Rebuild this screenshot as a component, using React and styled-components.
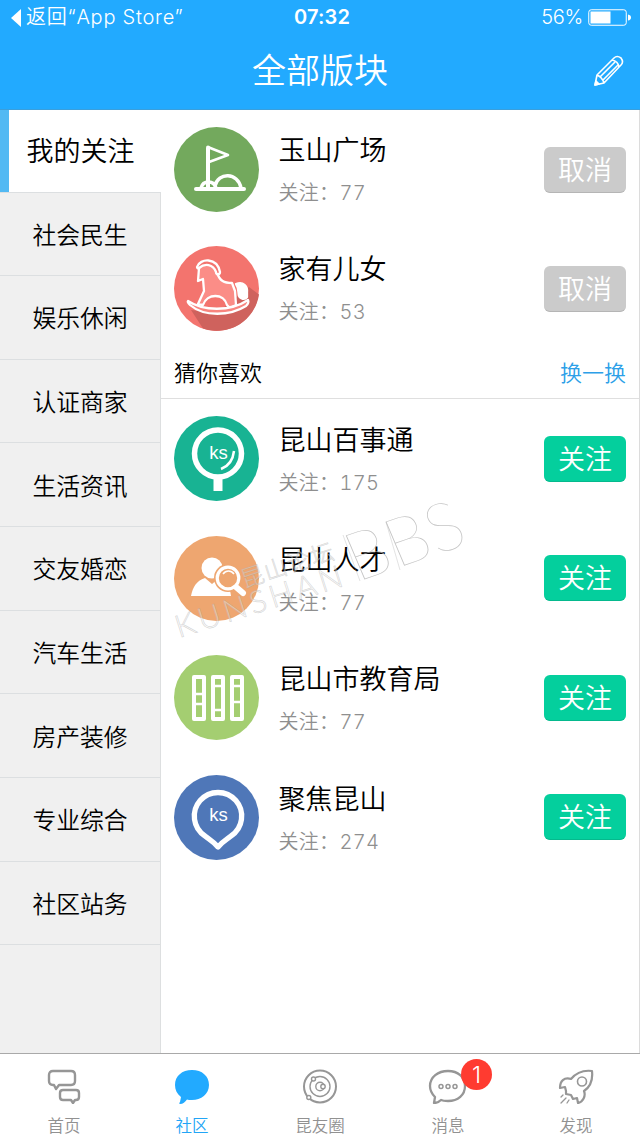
import React, { useState } from "react";
import styled, { createGlobalStyle } from "styled-components";

const GlobalStyle = createGlobalStyle`
    * {
        box-sizing: border-box;
    }
    body {
        margin: 0;
        background: #fff;
        font-family: "Inter", "Noto Sans CJK SC", sans-serif;
        font-weight: 350;
        color: #000;
    }
    button {
        font-family: inherit;
        font-weight: inherit;
        border: 0;
        padding: 0;
        background: none;
    }
    svg {
        display: block;
        flex: none;
    }
`;

const Screen = styled.div`
    position: relative;
    display: flex;
    flex-direction: column;
    width: 640px;
    height: 1138px;
    overflow: hidden;
`;

const Header = styled.header`
    height: 110px;
    background: #22aaff;
    border-bottom: 1px solid #3b9fdc;
    color: #fff;
`;

const StatusBar = styled.div`
    display: grid;
    grid-template-columns: 1fr auto 1fr;
    align-items: center;
    height: 35px;
    padding: 0 9px 0 11px;
    font-size: 20px;
    line-height: 35px;
    letter-spacing: 0.75px;
    font-weight: 400;
`;

const BackLink = styled.div`
    display: flex;
    align-items: center;
    gap: 5px;
    font-weight: 350;
    white-space: nowrap;
`;

const Clock = styled.div`
    padding-left: 2px;
    font-weight: 600;
    letter-spacing: 0.2px;
`;

const Battery = styled.div`
    display: flex;
    align-items: center;
    justify-content: flex-end;
    gap: 5px;
    letter-spacing: -0.3px;
    font-weight: 350;
`;

const TitleBar = styled.div`
    display: grid;
    grid-template-columns: 60px 1fr 60px;
    align-items: center;
    height: 72px;
    h1 {
        margin: 0;
        text-align: center;
        font-size: 34px;
        font-weight: 350;
        line-height: 70px;
    }
    svg {
        justify-self: end;
        margin-right: 15px;
    }
`;

const Content = styled.main`
    display: flex;
    height: 943px;
`;

const Sidebar = styled.nav`
    width: 161px;
    background: #f0f0f0;
    border-right: 1px solid #dddfe0;
`;

const SideItem = styled.div`
    display: flex;
    align-items: center;
    justify-content: center;
    width: ${(props) => (props.$active ? "161px" : "160px")};
    height: ${(props) => (props.$active ? "82.500px" : "83.650px")};
    padding-bottom: ${(props) => (props.$active ? "3px" : "1px")};
    border-bottom: 1px solid #dcdfe1;
    background: ${(props) => (props.$active ? "#fff" : "transparent")};
    box-shadow: ${(props) => (props.$active ? "inset 9px 0 #52b9f3" : "none")};
    font-size: ${(props) => (props.$active ? "27px" : "23.800px")};
    white-space: nowrap;
`;

const List = styled.section`
    flex: 1;
    border-right: 1px solid #dcdcdc;
`;

const Row = styled.div`
    display: flex;
    align-items: center;
    height: ${(props) => (props.$followed ? "119px" : "119.500px")};
    padding: 0 13px;
`;

const RowText = styled.div`
    flex: 1;
    margin-left: 19.500px;
    padding-top: ${(props) => (props.$followed ? "3px" : "5px")};
    h2 {
        margin: 0;
        font-size: 27px;
        font-weight: 350;
        line-height: 40px;
    }
    p {
        margin: 4px 0 0;
        font-size: 20px;
        line-height: 36px;
        letter-spacing: 0.3px;
        font-variant-numeric: tabular-nums;
        color: #8f8f8f;
    }
`;

const FollowButton = styled.button`
    width: 82px;
    height: 46px;
    padding-top: 2px;
    border-radius: 6px;
    border-bottom: 1px solid ${(props) => (props.$followed ? "#b5b5b5" : "#05b98d")};
    background: ${(props) => (props.$followed ? "#cbcbcb" : "#04cf9d")};
    color: #fff;
    font-size: 27px;
    line-height: 43px;
`;

const SectionHeader = styled.div`
    display: flex;
    align-items: center;
    justify-content: space-between;
    height: 51px;
    padding: 0 13px 4px;
    border-bottom: 1px solid #dfdfdf;
    font-size: 22px;
    span:last-child {
        color: #2d9fe8;
    }
`;

const TabBar = styled.footer`
    display: grid;
    grid-template-columns: repeat(5, 1fr);
    height: 85px;
    border-top: 1px solid #a9a9a9;
`;

const Tab = styled.div`
    position: relative;
    display: flex;
    flex-direction: column;
    align-items: center;
    padding-top: 12px;
    font-size: 16.5px;
    line-height: 24px;
    color: ${(props) => (props.$active ? "#22a5f6" : "#919191")};
    svg {
        margin-bottom: 10px;
    }
`;

const Badge = styled.span`
    position: absolute;
    left: 77px;
    top: 5px;
    width: 31px;
    height: 31px;
    border-radius: 50%;
    background: #ff3b30;
    color: #fff;
    font-size: 23px;
    line-height: 32px;
    text-align: center;
`;

const Watermark = styled.svg`
    position: absolute;
    left: 160px;
    top: 490px;
    pointer-events: none;
    text {
        font-family: "Lato", "Noto Sans CJK SC", sans-serif;
        font-weight: 300;
    }
    .thin {
        font-weight: 100;
    }
`;

const FlagIcon = () => (
    <g fill="none" stroke="#fff" strokeWidth="4" strokeLinecap="round" strokeLinejoin="round">
        <path d="M22 62h48" />
        <path d="M34 60V20.500" />
        <path d="M35 20.500l19 7.500-19 7" strokeWidth="2.600" />
        <path d="M27 61c2-8 13-8 15 0M41 59c3-14 23-14 26 2" strokeWidth="3.500" />
    </g>
);

const HorseIcon = () => (
    <g fill="none" stroke="#fff" strokeWidth="2.300" strokeLinecap="round" strokeLinejoin="round">
        <path
            d="M75 41L85 48.500A42.500 42.500 0 0 1 29 82.500L17 64 43 67z"
            fill="#cf625d"
            stroke="none"
        />
        <path
            d="M24 35l1-13c5-7 15-6 18 5 3 8 7 10 15 10l3 8 1 14-6 3-3-3c-3-12-20-12-24 0l-5-1 6-13-1-12z"
            fill="#fb8d87"
        />
        <path d="M23 21c3-9 20-10 23 5 0 3-4 3-4 0-3-8-11-9-17-4-1 1-2 0-2-1z" fill="#f3746e" />
        <path
            d="M14 55c15 10 42 11 60-1 1 2 0 4-2 6-16 10-42 11-56-1-2-2-3-3-2-4z"
            fill="#f8857f"
        />
        <path d="M62 38c7-3 12 2 11 9v4c-2 3-7 2-8-1-1-4 0-8-3-12z" fill="#fff" />
    </g>
);

const KsText = ({ y }) => (
    <text
        x="44.500"
        y={y}
        textAnchor="middle"
        fontSize="18.500"
        fontWeight="400"
        fontFamily="Liberation Sans"
        fill="#fff"
        stroke="none"
    >
        ks
    </text>
);

const MirrorIcon = () => (
    <g fill="none" stroke="#fff">
        <circle cx="44" cy="37.500" r="23.500" strokeWidth="5.500" />
        <path d="M44 61v14" strokeWidth="9" />
        <path d="M60 35c-1 9-5 15-13 18" strokeWidth="2.500" />
        <KsText y="43" />
    </g>
);

const TalentIcon = () => (
    <g fill="#fff">
        <path d="M17 60c2-9 5-15 14-18l7 6 6-5c9 2 12 8 13 17z" />
        <circle cx="38" cy="32" r="10.500" />
        <circle cx="54" cy="42" r="14" fill="#eea670" />
        <path d="M62 51l7 6" stroke="#fff" strokeWidth="6" strokeLinecap="round" />
        <circle cx="54" cy="42" r="10.800" fill="#eea670" stroke="#fff" strokeWidth="3.200" />
        <path d="M49 38c3-4 8-4 11 0" fill="none" stroke="#fff" strokeWidth="1.500" />
    </g>
);

const BooksIcon = () => (
    <g fill="none" stroke="#fff" strokeWidth="4" strokeLinejoin="round">
        <path d="M20 22h10v42H20zM39 22h10v42H39zM58 22h10v42H58z" />
        <path d="M20 39h10M20 49h10M39 31h10M39 55h10M58 31h10M58 47h10" strokeWidth="2.500" />
    </g>
);

const PinIcon = () => (
    <g fill="none" stroke="#fff">
        <path
            d="M44 72c-5-6-8-7-13-11a23.700 23.700 0 1 1 26 0c-5 4-8 5-13 11z"
            strokeWidth="5.300"
            strokeLinejoin="round"
        />
        <KsText y="45.500" />
    </g>
);

const FOLLOWED = [
    { name: "玉山广场", count: 77, color: "#73a95d", icon: <FlagIcon /> },
    { name: "家有儿女", count: 53, color: "#f3746e", icon: <HorseIcon /> },
];

const SUGGESTED = [
    { name: "昆山百事通", count: 175, color: "#18b393", icon: <MirrorIcon /> },
    { name: "昆山人才", count: 77, color: "#eea670", icon: <TalentIcon /> },
    { name: "昆山市教育局", count: 77, color: "#a4ce71", icon: <BooksIcon /> },
    { name: "聚焦昆山", count: 274, color: "#4f77b8", icon: <PinIcon /> },
];

const CATEGORIES = [
    "我的关注",
    "社会民生",
    "娱乐休闲",
    "认证商家",
    "生活资讯",
    "交友婚恋",
    "汽车生活",
    "房产装修",
    "专业综合",
    "社区站务",
];

const HomeIcon = () => (
    <svg width="36" height="38" viewBox="0 0 36 38" fill="none" stroke="#969696" strokeWidth="2.400" strokeLinejoin="round">
        <path d="M7 5h18q4 0 4 4v6q0 4-4 4H13l-3 4-2-4H7q-4 0-4-4V9q0-4 4-4z" />
        <path d="M17 24h13q3 0 3 3v4q0 3-3 3h-1l-2 3-2-3h-8q-3 0-3-3v-4q0-3 3-3z" />
    </svg>
);

const CommunityIcon = () => (
    <svg width="36" height="38" viewBox="0 0 36 38" fill="#22aaff">
        <path d="M18 4c10 0 17 6 17 15S27 34 18 34c-2 0-4 0-5-.5C11 36 9 38 6 38c-1 0-1-1 0-2l1-5C3 28 1 24 1 19 1 10 8 4 18 4z" />
    </svg>
);

const CircleIcon = () => (
    <svg width="36" height="38" viewBox="0 0 36 38" fill="none" stroke="#969696" strokeWidth="1.400">
        <circle cx="18" cy="20.500" r="16" strokeWidth="2" />
        <circle cx="18" cy="20.500" r="10" />
        <circle cx="18" cy="20.500" r="4.200" />
        <circle cx="21" cy="20.500" r="2.200" fill="#fff" />
        <circle cx="11.500" cy="13" r="2" fill="#fff" />
        <circle cx="6.800" cy="31.500" r="2" fill="#fff" />
    </svg>
);

const MessageIcon = () => (
    <svg width="40" height="38" viewBox="0 0 40 38" fill="none" stroke="#969696" strokeWidth="2.300" strokeLinejoin="round">
        <path d="M20 5c10 0 17 6 17 15s-7 15-17 15c-3 0-5 0-7-1-2 2-4 3-7 3l1-6c-3-3-5-7-5-11C2 11 10 5 20 5z" />
        <g strokeWidth="1.500">
            <circle cx="13" cy="20.500" r="2" />
            <circle cx="20" cy="20.500" r="2" />
            <circle cx="27" cy="20.500" r="2" />
        </g>
    </svg>
);

const RocketIcon = () => (
    <svg width="36" height="38" viewBox="0 0 36 38" fill="none" stroke="#969696" strokeWidth="2.200" strokeLinejoin="round" strokeLinecap="round">
        <path d="M8 25l-1-4-5 1c0-7 4-11 11-9C18 7 26 4 34 5c1 9-2 16-8 20 2 5-1 11-6 12l-1-5-4 1-2-4-5-1z" />
        <circle cx="24" cy="15.500" r="4.500" strokeWidth="1.600" />
        <path d="M5 29l-2 2M8 32l-5 5M11 34l-2 3" strokeWidth="1.300" />
    </svg>
);

const TABS = [
    { label: "首页", icon: <HomeIcon /> },
    { label: "社区", icon: <CommunityIcon /> },
    { label: "昆友圈", icon: <CircleIcon /> },
    { label: "消息", icon: <MessageIcon />, badge: 1 },
    { label: "发现", icon: <RocketIcon /> },
];

const BoardRow = ({ board, followed }) => (
    <Row $followed={followed}>
        <svg width="85" height="85" viewBox="0 0 85 85">
            <circle cx="42.500" cy="42.500" r="42.500" fill={board.color} />
            {board.icon}
        </svg>
        <RowText $followed={followed}>
            <h2>{board.name}</h2>
            <p>关注：{board.count}</p>
        </RowText>
        <FollowButton $followed={followed}>{followed ? "取消" : "关注"}</FollowButton>
    </Row>
);

export default function App() {
    const [category, setCategory] = useState("我的关注");
    const [tab, setTab] = useState("社区");

    return (
        <Screen>
            <GlobalStyle />
            <Header>
                <StatusBar>
                    <BackLink>
                        <svg width="10" height="18" viewBox="0 0 10 18" fill="#fff">
                            <path d="M10 0v18L0 9z" />
                        </svg>
                        返回“App Store”
                    </BackLink>
                    <Clock>07:32</Clock>
                    <Battery>
                        56%
                        <svg width="43" height="17" viewBox="0 0 43 17">
                            <rect x=".75" y=".75" width="37.500" height="15.500" rx="2.500" fill="none" stroke="#fff" />
                            <rect x="2.500" y="2.500" width="20" height="12" fill="#fff" />
                            <path d="M40 5.500q3 .5 3 3t-3 3z" fill="#fff" />
                        </svg>
                    </Battery>
                </StatusBar>
                <TitleBar>
                    <span />
                    <h1>全部版块</h1>
                    <svg width="32" height="32" viewBox="0 0 32 32" fill="none" stroke="#fff" strokeWidth="1.600" strokeLinejoin="round">
                        <path d="M2 30l2-10L21 3q3-3 7 0 3 4 0 7L11 28zM4 20q5 2 7 8M19 5q6 1 7 7M7 22L22 7M10 25L25 10" />
                        <path d="M2 30l4-1-3-3z" fill="#fff" />
                    </svg>
                </TitleBar>
            </Header>
            <Content>
                <Sidebar>
                    {CATEGORIES.map((name) => (
                        <SideItem key={name} $active={name === category} onClick={() => setCategory(name)}>
                            {name}
                        </SideItem>
                    ))}
                </Sidebar>
                <List>
                    {FOLLOWED.map((board) => (
                        <BoardRow key={board.name} board={board} followed />
                    ))}
                    <SectionHeader>
                        <span>猜你喜欢</span>
                        <span>换一换</span>
                    </SectionHeader>
                    {SUGGESTED.map((board) => (
                        <BoardRow key={board.name} board={board} />
                    ))}
                </List>
            </Content>
            <TabBar>
                {TABS.map((item) => (
                    <Tab key={item.label} $active={item.label === tab} onClick={() => setTab(item.label)}>
                        {item.icon}
                        {item.label}
                        {item.badge && <Badge>{item.badge}</Badge>}
                    </Tab>
                ))}
            </TabBar>
            <Watermark width="340" height="170" viewBox="0 0 340 170">
                <g fill="#fff" fillOpacity=".4" stroke="#999" strokeOpacity=".4" strokeWidth=".7">
                    <text transform="translate(19 148) rotate(-17.500)" fontSize="31" textLength="174">
                        KUNSHAN
                    </text>
                    <text transform="translate(84 98) rotate(-18)" fontSize="23" textLength="96">
                        昆山论坛
                    </text>
                    <path d="M183 45l17 46M226 32l14 48" fill="none" />
                </g>
                <text
                    className="thin"
                    transform="translate(197 92) rotate(-19) skewX(4)"
                    fontSize="68"
                    textLength="120"
                    fill="#b5b5b5"
                    fillOpacity=".8"
                >
                    BBS
                </text>
            </Watermark>
        </Screen>
    );
}
